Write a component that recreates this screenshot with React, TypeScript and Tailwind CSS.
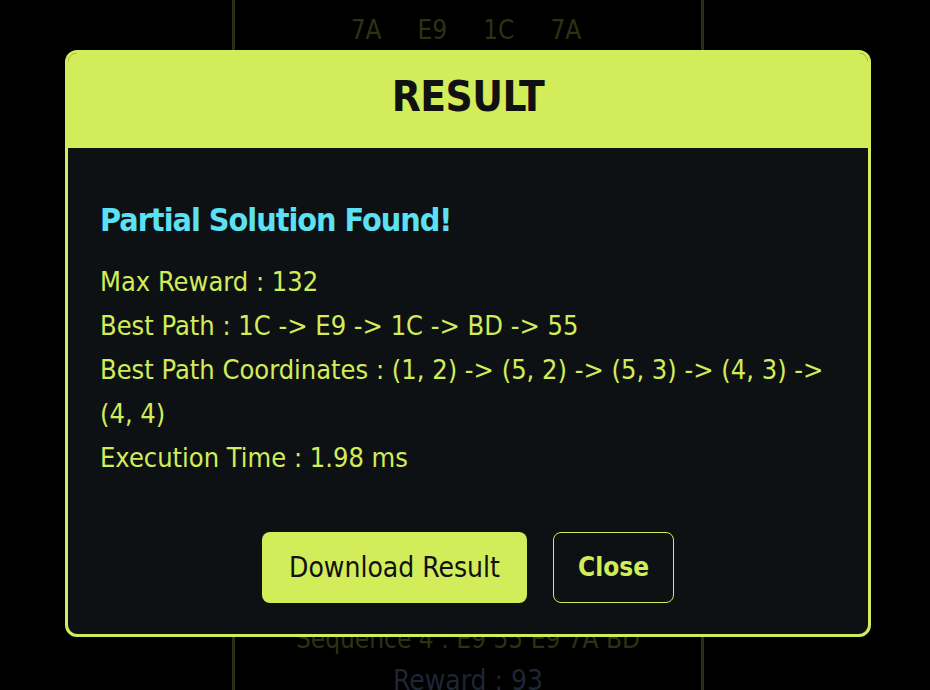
import React from "react";

const font = { fontFamily: '"DejaVu Sans Condensed", "DejaVu Sans", Roboto, sans-serif' };

export default function App() {
  return (
    <div className="relative w-[930px] h-[690px] bg-black overflow-hidden" style={font}>
      {/* background page */}
      <div className="ml-[232px] w-[472px] h-[690px] border-x-[3px] border-[#2a3012] flex flex-col items-center">
        <div className="flex gap-[36px] pt-[11px] pr-[4px] text-[26px] text-[#2c3311]">
          <span>7A</span>
          <span>E9</span>
          <span>1C</span>
          <span>7A</span>
        </div>
        <div className="mt-auto flex flex-col items-center">
          <div className="text-[26px] text-[#2c3311] leading-[30px]">Sequence 4 : E9 55 E9 7A BD</div>
          <div className="mt-[12px] text-[28px] text-[#1c2636] leading-[30px] mb-[-6px]">Reward : 93</div>
        </div>
      </div>

      {/* modal */}
      <div className="absolute left-[65px] top-[50px] w-[806px] h-[587px] rounded-[12px] border-[3px] border-[#d2ec5a] bg-[#0e1114] overflow-hidden flex flex-col">
        <div className="h-[95px] bg-[#d2ec5a] flex items-center justify-center pb-[8px]">
          <span className="text-[42px] font-bold text-[#111] tracking-[-0.5px]">RESULT</span>
        </div>
        <div className="flex-1 px-[32px] pt-[52px] flex flex-col">
          <div className="text-[32px] font-bold text-[#5ce1f3] leading-[40px] tracking-[-1px]">Partial Solution Found!</div>
          <div className="mt-[20px] text-[27px] leading-[44px] text-[#d2ec5a]">
            <div>Max Reward : 132</div>
            <div>Best Path : 1C -&gt; E9 -&gt; 1C -&gt; BD -&gt; 55</div>
            <div>
              Best Path Coordinates : (1, 2) -&gt; (5, 2) -&gt; (5, 3) -&gt; (4, 3) -&gt;{" "}
              <span className="whitespace-nowrap">(4, 4)</span>
            </div>
            <div>Execution Time : 1.98 ms</div>
          </div>
          <div className="mt-[52px] flex justify-center gap-[26px]">
            <button className="w-[265px] h-[71px] rounded-[8px] bg-[#d2ec5a] text-[28px] font-medium text-[#111]">Download Result</button>
            <button className="w-[121px] h-[71px] rounded-[8px] border border-[#d2ec5a] text-[26px] font-semibold text-[#d2ec5a]">Close</button>
          </div>
        </div>
      </div>
    </div>
  );
}
